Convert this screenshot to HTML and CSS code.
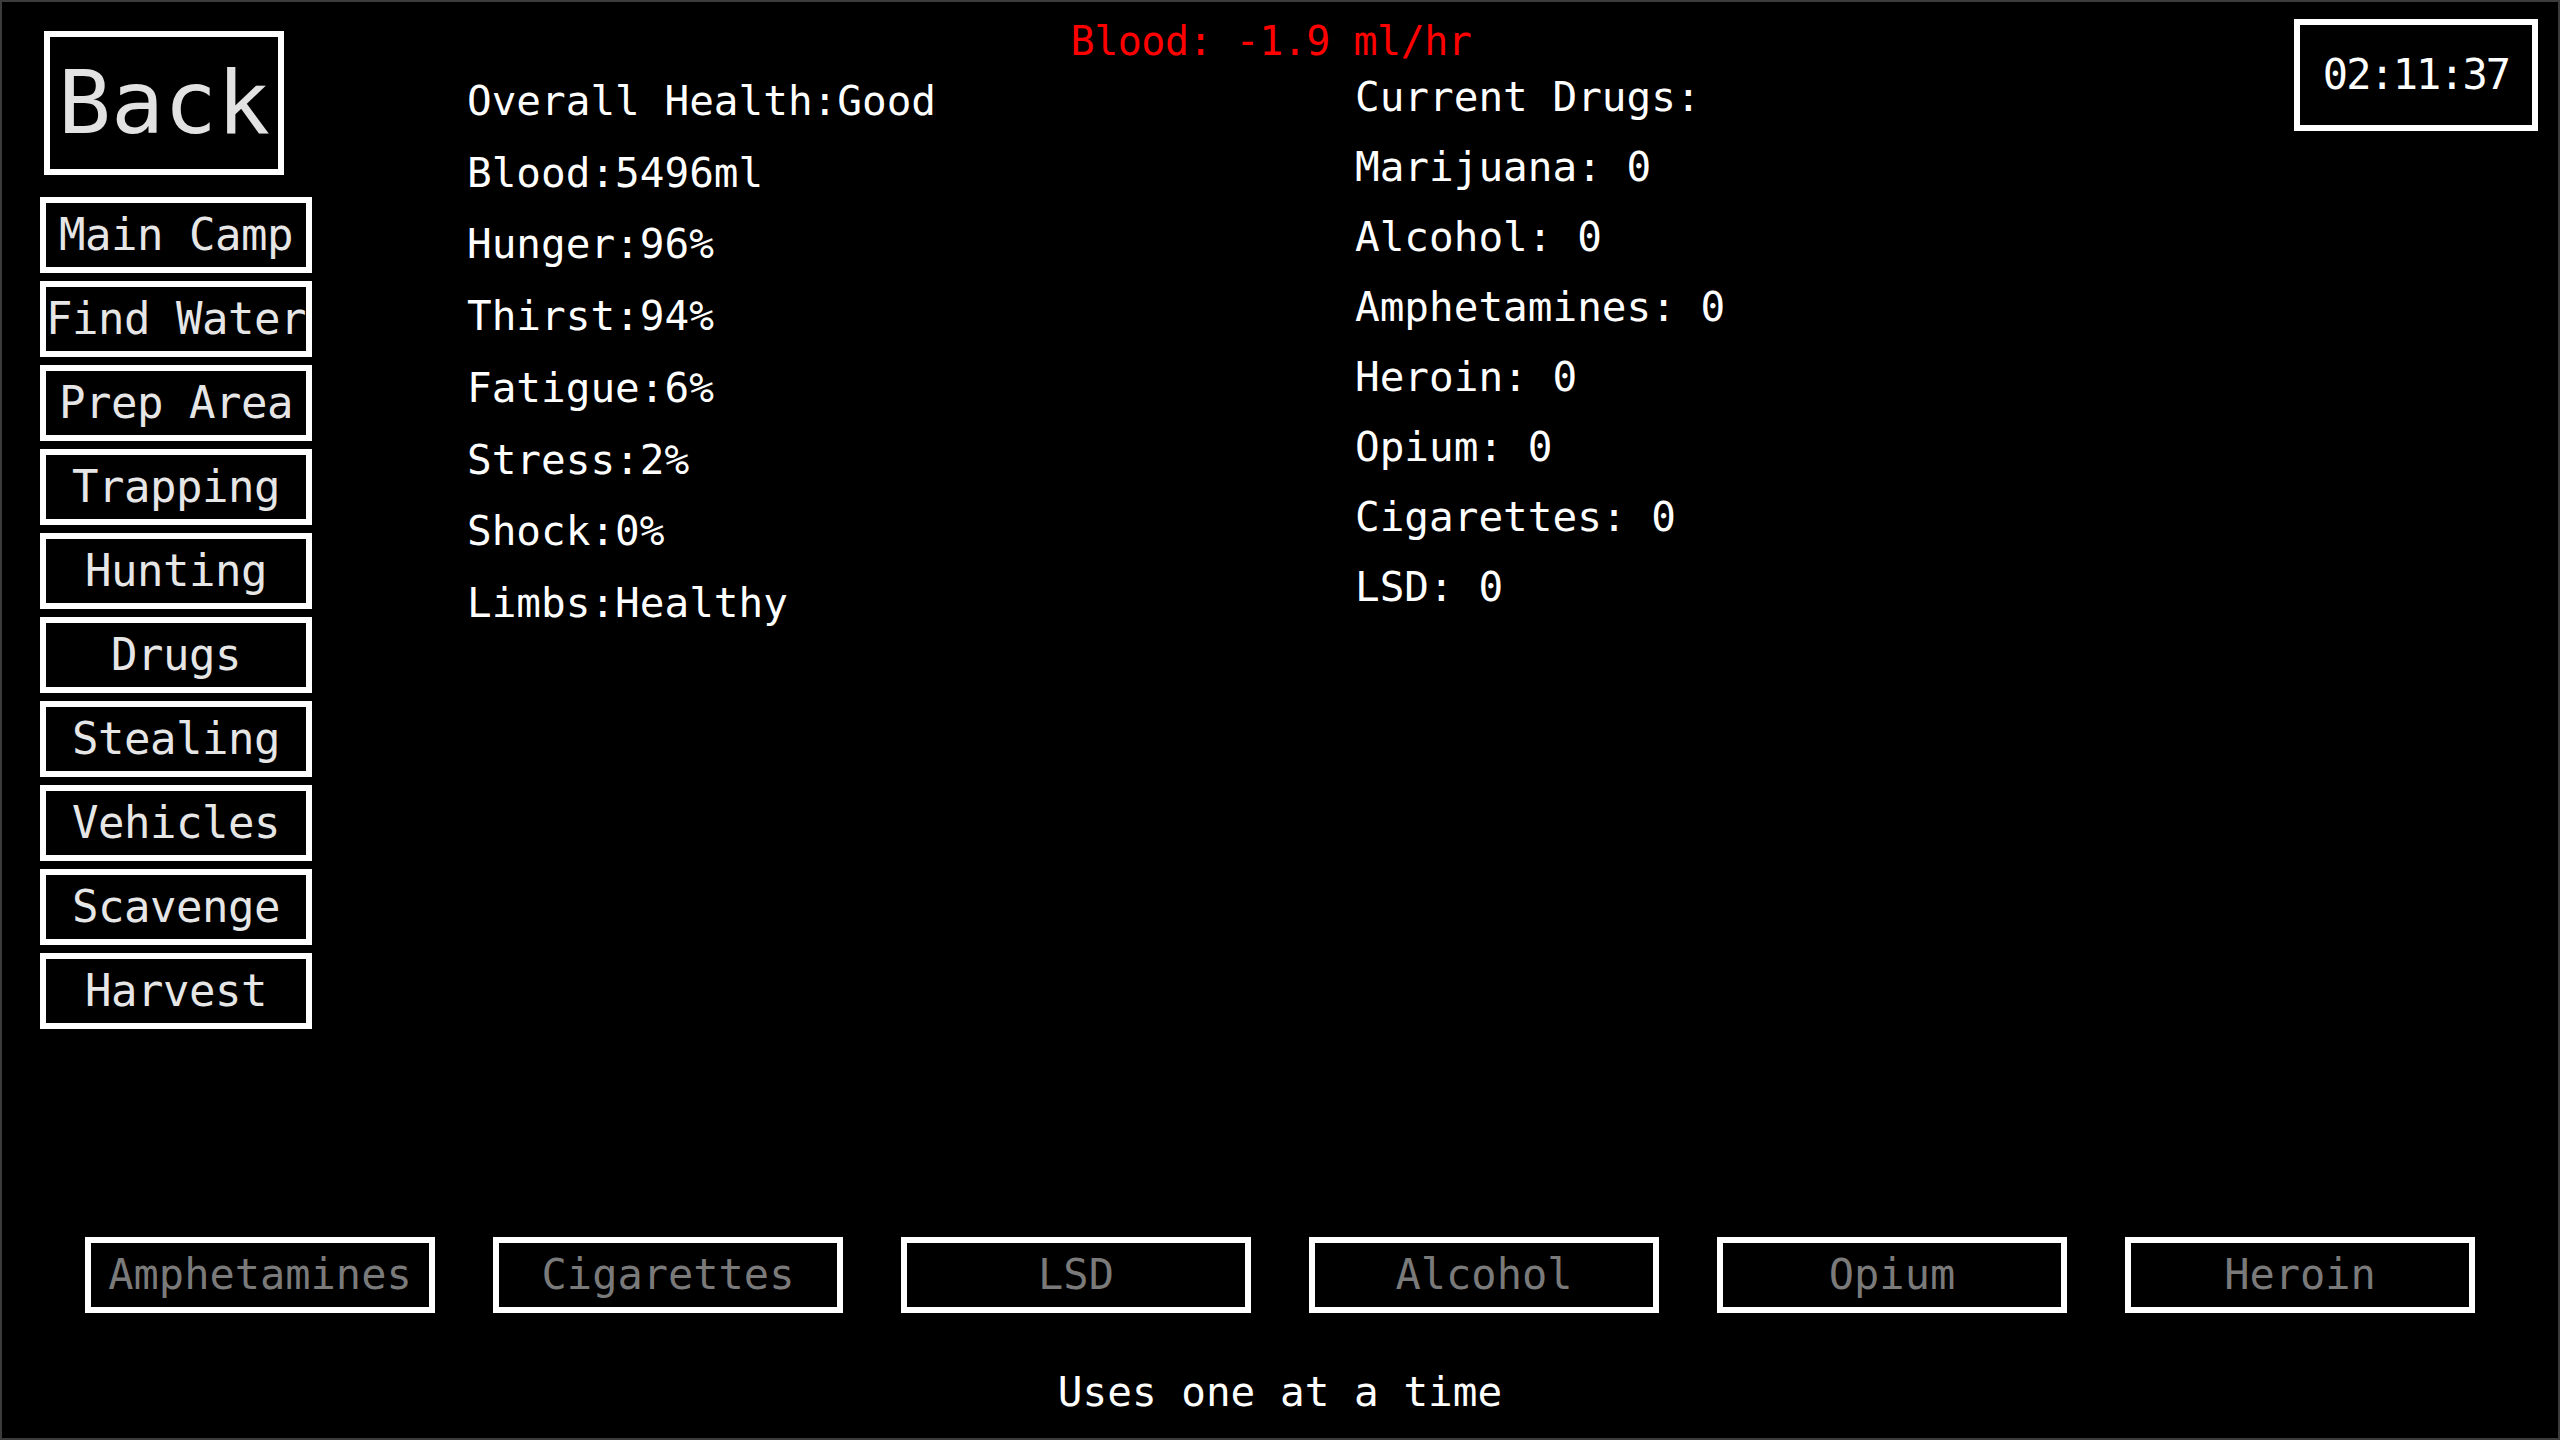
FILE: index.html
```html
<!DOCTYPE html>
<html lang="en">
<head>
<meta charset="utf-8">
<title>Status</title>
<link rel="stylesheet" href="styles.css">
</head>
<body>
<div class="screen">
  <div class="top">
    <nav class="sidebar">
      <div class="back">Back</div>
      <div class="nav-btn">Main Camp</div>
      <div class="nav-btn">Find Water</div>
      <div class="nav-btn">Prep Area</div>
      <div class="nav-btn">Trapping</div>
      <div class="nav-btn">Hunting</div>
      <div class="nav-btn">Drugs</div>
      <div class="nav-btn">Stealing</div>
      <div class="nav-btn">Vehicles</div>
      <div class="nav-btn">Scavenge</div>
      <div class="nav-btn">Harvest</div>
    </nav>
    <div class="rate">Blood: -1.9 ml/hr</div>
    <div class="stats">
      <div class="line">Overall Health:Good</div>
      <div class="line">Blood:5496ml</div>
      <div class="line">Hunger:96%</div>
      <div class="line">Thirst:94%</div>
      <div class="line">Fatigue:6%</div>
      <div class="line">Stress:2%</div>
      <div class="line">Shock:0%</div>
      <div class="line">Limbs:Healthy</div>
    </div>
    <div class="drugs">
      <div class="line">Current Drugs:</div>
      <div class="line">Marijuana: 0</div>
      <div class="line">Alcohol: 0</div>
      <div class="line">Amphetamines: 0</div>
      <div class="line">Heroin: 0</div>
      <div class="line">Opium: 0</div>
      <div class="line">Cigarettes: 0</div>
      <div class="line">LSD: 0</div>
    </div>
    <div class="timer">02:11:37</div>
  </div>
  <div class="drug-buttons">
    <div class="drug-btn">Amphetamines</div>
    <div class="drug-btn">Cigarettes</div>
    <div class="drug-btn">LSD</div>
    <div class="drug-btn">Alcohol</div>
    <div class="drug-btn">Opium</div>
    <div class="drug-btn">Heroin</div>
  </div>
  <div class="note">Uses one at a time</div>
</div>
</body>
</html>
```
FILE: styles.css
```css
html, body {
  margin: 0;
  padding: 0;
  background: #000;
}

.screen {
  width: 2560px;
  height: 1440px;
  box-sizing: border-box;
  background: #000;
  box-shadow: inset 0 0 0 2px #3c3c3c;
  display: flex;
  flex-direction: column;
  font-family: "DejaVu Sans Mono", "Liberation Mono", monospace;
  color: #fff;
  padding: 16px 22px 18px 40px;
}

.top {
  display: grid;
  grid-template-columns: 272px 1043px 1fr 244px;
  grid-template-rows: 50px auto;
}

.sidebar {
  grid-column: 1;
  grid-row: 1 / span 2;
  display: flex;
  flex-direction: column;
  gap: 8px;
  margin-top: 15px;
}

.back {
  width: 240px;
  height: 144px;
  margin-left: 4px;
  margin-bottom: 14px;
  box-sizing: border-box;
  border: 6px solid #fff;
  display: flex;
  align-items: center;
  justify-content: center;
  font-size: 88px;
  color: #e2e2e2;
  line-height: 1;
}

.nav-btn {
  width: 272px;
  height: 76px;
  box-sizing: border-box;
  border: 6px solid #fff;
  display: flex;
  align-items: center;
  justify-content: center;
  font-size: 44px;
  letter-spacing: -0.5px;
  color: #e6e6e6;
  white-space: nowrap;
  line-height: 1;
}

.rate {
  grid-column: 2 / 4;
  grid-row: 1;
  text-align: center;
  padding-right: 64px;
  font-size: 40px;
  line-height: 50px;
  color: #ff0000;
  letter-spacing: -0.5px;
}

.stats {
  grid-column: 2;
  grid-row: 2;
  padding-left: 155px;
}

.stats .line {
  font-size: 41px;
  line-height: 71.7px;
  white-space: nowrap;
}

.drugs {
  grid-column: 3;
  grid-row: 2;
  margin-top: -4px;
}

.drugs .line {
  font-size: 41px;
  line-height: 70px;
  white-space: nowrap;
}

.timer {
  grid-column: 4;
  grid-row: 1 / span 2;
  align-self: start;
  margin-top: 3px;
  width: 244px;
  height: 112px;
  box-sizing: border-box;
  border: 6px solid #fff;
  display: flex;
  align-items: center;
  justify-content: center;
  font-size: 42px;
  letter-spacing: -2px;
  line-height: 1;
}

.drug-buttons {
  margin-top: auto;
  margin-left: -18px;
  display: flex;
  justify-content: center;
  gap: 58px;
}

.drug-btn {
  width: 350px;
  height: 76px;
  box-sizing: border-box;
  border: 6px solid #fff;
  display: flex;
  align-items: center;
  justify-content: center;
  font-size: 42px;
  color: #7a7a7a;
  line-height: 1;
  white-space: nowrap;
}

.note {
  margin-top: 49px;
  margin-left: -18px;
  text-align: center;
  font-size: 41px;
  line-height: 60px;
}
```
